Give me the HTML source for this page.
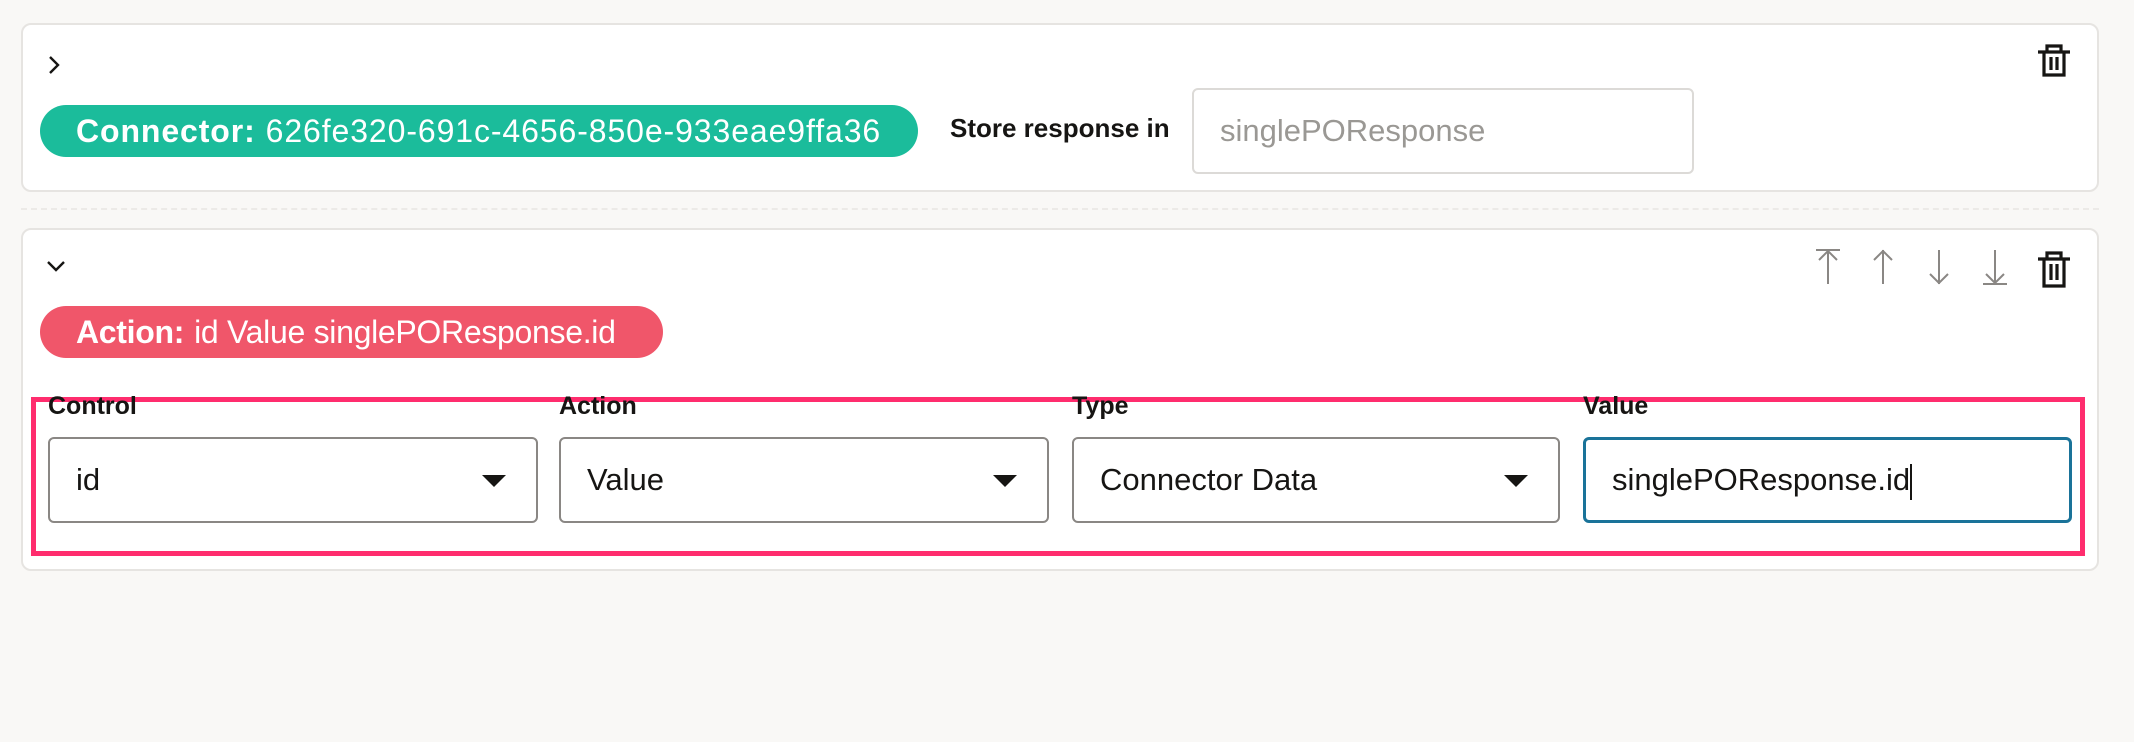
<!DOCTYPE html>
<html><head><meta charset="utf-8"><style>
body{margin:0;width:2134px;height:742px;background:#f9f8f6;font-family:"Liberation Sans",sans-serif;position:relative;overflow:hidden;color:#161513}
.card{position:absolute;left:21px;width:2078px;background:#fff;border:2px solid #e6e4e1;border-radius:10px;box-sizing:border-box}
.pill{position:absolute;height:52px;border-radius:26px;color:#fff;font-size:32px;line-height:52px;padding-left:36px;box-sizing:border-box;white-space:nowrap;letter-spacing:-0.3px}
.pill b{margin-right:10px}
.lbl{position:absolute;font-size:25px;font-weight:bold;top:392px}
.sel{position:absolute;top:437px;height:86px;border:2px solid #8a8784;border-radius:6px;box-sizing:border-box;font-size:31px;line-height:82px;padding-left:26px;background:#fff}
.sel .arr{position:absolute;right:30px;top:36px;width:0;height:0;border-left:12px solid transparent;border-right:12px solid transparent;border-top:12px solid #161513}
svg{position:absolute}
</style></head><body>
<div class="card" style="top:23px;height:169px"></div>
<svg style="left:46px;top:55px" width="16" height="20" viewBox="0 0 16 20"><path d="M4 2 L12 10 L4 18" fill="none" stroke="#161513" stroke-width="2.4"/></svg>
<svg style="left:2036px;top:43px" width="36" height="34" viewBox="0 0 36 34"><path d="M2 9 H34 M11 9 V3 H25 V9 M8 9 V32 H28 V9 M15 14 V27 M21 14 V27" fill="none" stroke="#161513" stroke-width="3.2"/></svg>
<div class="pill" style="left:40px;top:105px;width:878px;background:#1bbc9b;letter-spacing:0.9px"><b>Connector:</b>626fe320-691c-4656-850e-933eae9ffa36</div>
<div style="position:absolute;left:950px;top:113px;font-size:26px;font-weight:bold">Store response in</div>
<div style="position:absolute;left:1192px;top:88px;width:502px;height:86px;border:2px solid #dcdad7;border-radius:6px;box-sizing:border-box;font-size:31px;color:#9a9894;line-height:82px;padding-left:26px">singlePOResponse</div>
<div style="position:absolute;left:21px;top:208px;width:2078px;border-top:2px dashed #eceae7"></div>
<div class="card" style="top:228px;height:343px"></div>
<svg style="left:46px;top:259px" width="20" height="14" viewBox="0 0 20 14"><path d="M2 3 L10 11 L18 3" fill="none" stroke="#161513" stroke-width="2.4"/></svg>
<svg style="left:1812px;top:248px" width="260" height="40" viewBox="0 0 260 40"><g fill="none" stroke="#8a8784" stroke-width="2"><path d="M4 2 H28 M16 2 V36 M7 12 L16 3 L25 12"/><path d="M71 2 V36 M62 12 L71 3 L80 12"/><path d="M127 2 V36 M118 26 L127 35 L136 26"/><path d="M183 2 V36 M174 26 L183 35 L192 26 M171 36 H195"/></g><path d="M226 11 H258 M235 11 V5 H249 V11 M232 11 V38 H252 V11 M239 16 V32 M245 16 V32" fill="none" stroke="#161513" stroke-width="3.2"/></svg>
<div class="pill" style="left:40px;top:306px;width:623px;background:#f0566a"><b>Action:</b>id Value singlePOResponse.id</div>
<div style="position:absolute;left:31px;top:397px;width:2054px;height:159px;border:5px solid #ff2d6e;box-sizing:border-box"></div>
<div class="lbl" style="left:48px">Control</div>
<div class="lbl" style="left:559px">Action</div>
<div class="lbl" style="left:1072px">Type</div>
<div class="lbl" style="left:1583px">Value</div>
<div class="sel" style="left:48px;width:490px">id<span class="arr"></span></div>
<div class="sel" style="left:559px;width:490px">Value<span class="arr"></span></div>
<div class="sel" style="left:1072px;width:488px">Connector Data<span class="arr"></span></div>
<div class="sel" style="left:1583px;width:489px;border:3px solid #1a7399;line-height:80px">singlePOResponse.id<span style="display:inline-block;width:2px;height:36px;background:#161513;vertical-align:middle"></span></div>
</body></html>
